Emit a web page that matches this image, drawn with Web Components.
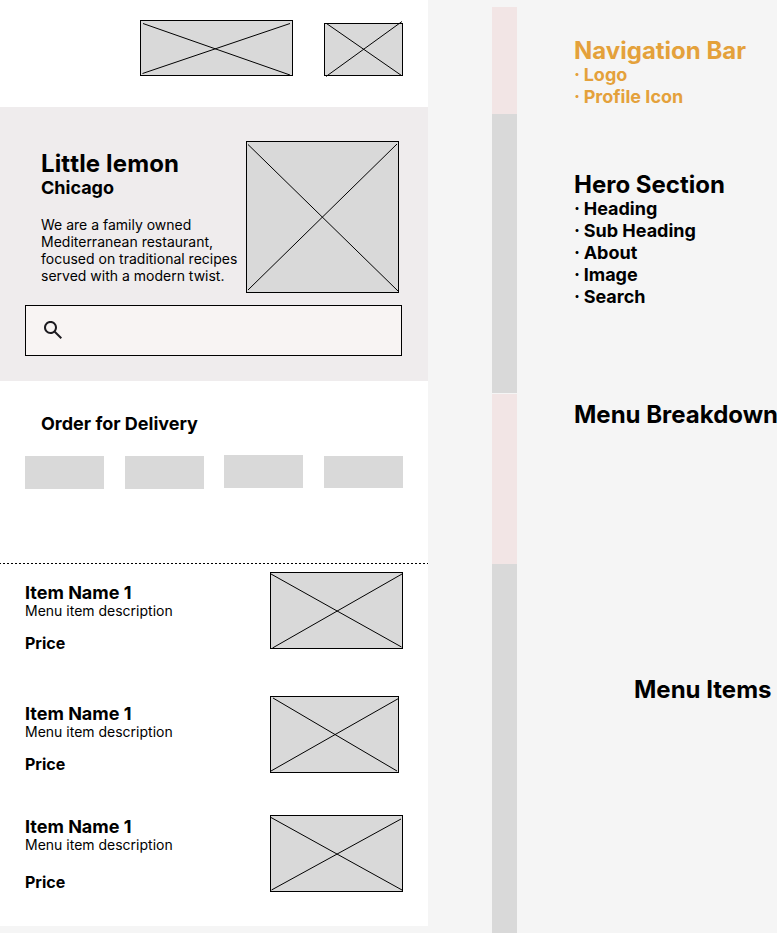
<!DOCTYPE html>
<html lang="en">
<head>
<meta charset="utf-8">
<title>Little Lemon wireframe</title>
<style>
html,body{margin:0;height:933px;overflow:hidden;background:#f5f5f5}
body{font-family:Inter,"Liberation Sans",sans-serif;color:#000}
</style>
</head>
<body>
<wire-board></wire-board>
<script>
const define = (name, html, setup) => customElements.define(name, class extends HTMLElement {
  connectedCallback() {
    if (this.shadowRoot) return;
    this.attachShadow({ mode: 'open' }).innerHTML = typeof html === 'function' ? html(this) : html;
    if (setup) setup(this, this.shadowRoot);
  }
});

// Image placeholder: bordered box crossed by two lines. lines = "x1,y1,x2,y2 x1,y1,x2,y2"
define('wire-image', `<style>
:host{display:block;flex:none;box-sizing:border-box;background:#d9d9d9;border:1px solid #000}
svg{display:block;margin:-1px;overflow:visible}
path{stroke:#000;stroke-width:1;fill:none}
</style><svg><path/></svg>`, (el, root) => {
  const [w, h] = el.getAttribute('size').split('x');
  el.style.width = w + 'px';
  el.style.height = h + 'px';
  const svg = root.querySelector('svg');
  svg.setAttribute('width', w);
  svg.setAttribute('height', h);
  root.querySelector('path').setAttribute('d', el.getAttribute('lines').split(' ').map(l => {
    const p = l.split(',');
    return `M${p[0]} ${p[1]}L${p[2]} ${p[3]}`;
  }).join(''));
});

define('nav-bar', `<style>
:host{display:flex;box-sizing:border-box;height:107px;padding:20px 25px 0 140px;justify-content:space-between;align-items:flex-start}
.profile{margin-top:3px}
</style>
<wire-image size="153x56" lines="3,3.5,150,55 2.5,53.5,150,3.5"></wire-image>
<wire-image class="profile" size="79x53" lines="2.5,.5,77.5,52.5 2,53.5,78,-1.5"></wire-image>`);

define('search-box', `<style>
:host{display:flex;align-items:flex-start;box-sizing:border-box;width:377px;height:51px;border:1px solid #000;background:#f8f4f3;padding:12px 15px}
svg{display:block}
</style>
<svg width="24" height="24" viewBox="0 0 24 24"><path fill="#1d1b20" d="M19.6 21L13.3 14.7C12.8 15.1 12.225 15.4167 11.575 15.65C10.925 15.8833 10.2333 16 9.5 16C7.68333 16 6.14583 15.3708 4.8875 14.1125C3.62917 12.8542 3 11.3167 3 9.5C3 7.68333 3.62917 6.14583 4.8875 4.8875C6.14583 3.62917 7.68333 3 9.5 3C11.3167 3 12.8542 3.62917 14.1125 4.8875C15.3708 6.14583 16 7.68333 16 9.5C16 10.2333 15.8833 10.925 15.65 11.575C15.4167 12.225 15.1 12.8 14.7 13.3L21 19.6L19.6 21ZM9.5 14C10.75 14 11.8125 13.5625 12.6875 12.6875C13.5625 11.8125 14 10.75 14 9.5C14 8.25 13.5625 7.1875 12.6875 6.3125C11.8125 5.4375 10.75 5 9.5 5C8.25 5 7.1875 5.4375 6.3125 6.3125C5.4375 7.1875 5 8.25 5 9.5C5 10.75 5.4375 11.8125 6.3125 12.6875C7.1875 13.5625 8.25 14 9.5 14Z"/></svg>`);

define('hero-section', `<style>
:host{display:block;box-sizing:border-box;height:274px;padding:34px 0 0 25px;background:#efeced}
.row{display:flex;padding-left:16px;height:164px}
.copy{width:205px;padding-top:8px}
h1,h2,p{margin:0;white-space:nowrap}
h1{font-size:24px;line-height:29px;font-weight:700;font-kerning:none;letter-spacing:.14px}
h2{font-size:18px;line-height:22px;font-weight:700;margin-top:-1px}
p{font-size:14px;line-height:17px;margin-top:17px}
</style>
<div class="row"><div class="copy"><h1>Little lemon</h1><h2>Chicago</h2>
<p>We are a family owned<br>Mediterranean restaurant,<br>focused on traditional recipes<br>served with a modern twist.</p></div>
<wire-image size="153x152" lines="2,3.5,152,150 2,149,151,3"></wire-image></div>
<search-box></search-box>`);

define('delivery-section', `<style>
:host{display:block;box-sizing:border-box;height:182px;padding:32px 25px 0}
h2{margin:0 0 0 16px;font-size:18px;line-height:22px;font-weight:700}
.chips{display:grid;grid-template-columns:100px 99px 100px 79px;margin-top:20px}
i{display:block;width:79px;height:33px;background:#d9d9d9;margin-top:1px}
i:nth-child(3){margin-top:0}
i:nth-child(4){height:32px}
</style>
<h2>Order for Delivery</h2>
<div class="chips"><i></i><i></i><i></i><i></i></div>`);

define('menu-item', el => `<style>
:host{display:flex;box-sizing:border-box;padding-left:25px}
.copy{width:245px;padding-top:var(--top,10px)}
h3,p{margin:0}
h3{font-size:18px;line-height:22px;font-weight:700}
p{font-size:14px;line-height:17px;margin-top:-2px}
.price{font-size:16px;line-height:19px;font-weight:700;margin-top:var(--gap,15px)}
</style>
<div class="copy"><h3><slot></slot></h3><p><slot name="about"></slot></p><div class="price"><slot name="price"></slot></div></div>
<wire-image size="${el.getAttribute('size')}" lines="${el.getAttribute('lines')}"></wire-image>`);

const item = (cls, size, lines) => `<menu-item class="${cls}" size="${size}" lines="${lines}">Item Name 1<span slot="about">Menu item description</span><span slot="price">Price</span></menu-item>`;
define('menu-list', `<style>
:host{display:block}
.rule{height:1px;background:repeating-linear-gradient(90deg,#000 0 2px,transparent 2px 4px) -1px 0/432px 1px;margin-bottom:8px}
menu-item{height:77px}
.a{margin-bottom:47px;--top:10px}
.b{margin-bottom:42px;--top:7px}
.c{--top:1px;--gap:20px}
</style><div class="rule"></div>`
 + item('a', '133x77', '1,2,131.5,75 2.5,76,132,2')
 + item('b', '129x77', '3,2,127,75 1,75,128.5,2.5')
 + item('c', '133x77', '1,2.5,132,75 1.5,75,131,4'));

define('phone-frame', `<style>
:host{display:block;width:428px;height:926px;background:#fff;flex:none}
</style><slot></slot>`);

define('section-rail', `<style>
:host{display:flex;flex-direction:column;flex:none;width:25px;height:933px;margin-left:64px;padding-top:7px;box-sizing:border-box}
i{flex:none;background:#d9d9d9}
.p{background:#f2e5e5}
</style><i class="p" style="height:107px"></i><i style="height:279px"></i><i class="p" style="height:170px;margin-top:1px"></i><i style="height:369px"></i>`);

define('section-note', `<style>
:host{display:block;white-space:nowrap;font-size:18px;line-height:22px;font-weight:700}
h2{margin:0 0 -1px;font-size:24px;line-height:29px;font-weight:700}
</style><h2><slot name="title"></slot></h2><slot></slot>`);

define('wire-board', `<style>
:host{display:flex;height:933px;align-items:flex-start}
.notes{flex:1;height:933px;box-sizing:border-box;padding:36px 0 0 57px;min-width:0}
.n1{color:#e4a13b;height:134px}
.n2{height:230px}
.n3{height:275px}
.n4{margin-left:60px}
b{font-weight:inherit;margin-right:-.6px}
</style>
<phone-frame><nav-bar></nav-bar><hero-section></hero-section><delivery-section></delivery-section><menu-list></menu-list></phone-frame>
<section-rail></section-rail>
<div class="notes">
<section-note class="n1"><span slot="title">Navigation Bar</span><div><b>·</b> Logo</div><div><b>·</b> Profile Icon</div></section-note>
<section-note class="n2"><span slot="title">Hero Section</span><div><b>·</b> Heading</div><div><b>·</b> Sub Heading</div><div><b>·</b> About</div><div><b>·</b> Image</div><div><b>·</b> Search</div></section-note>
<section-note class="n3"><span slot="title">Menu Breakdown</span></section-note>
<section-note class="n4"><span slot="title">Menu Items</span></section-note>
</div>`);
</script>
</body>
</html>
